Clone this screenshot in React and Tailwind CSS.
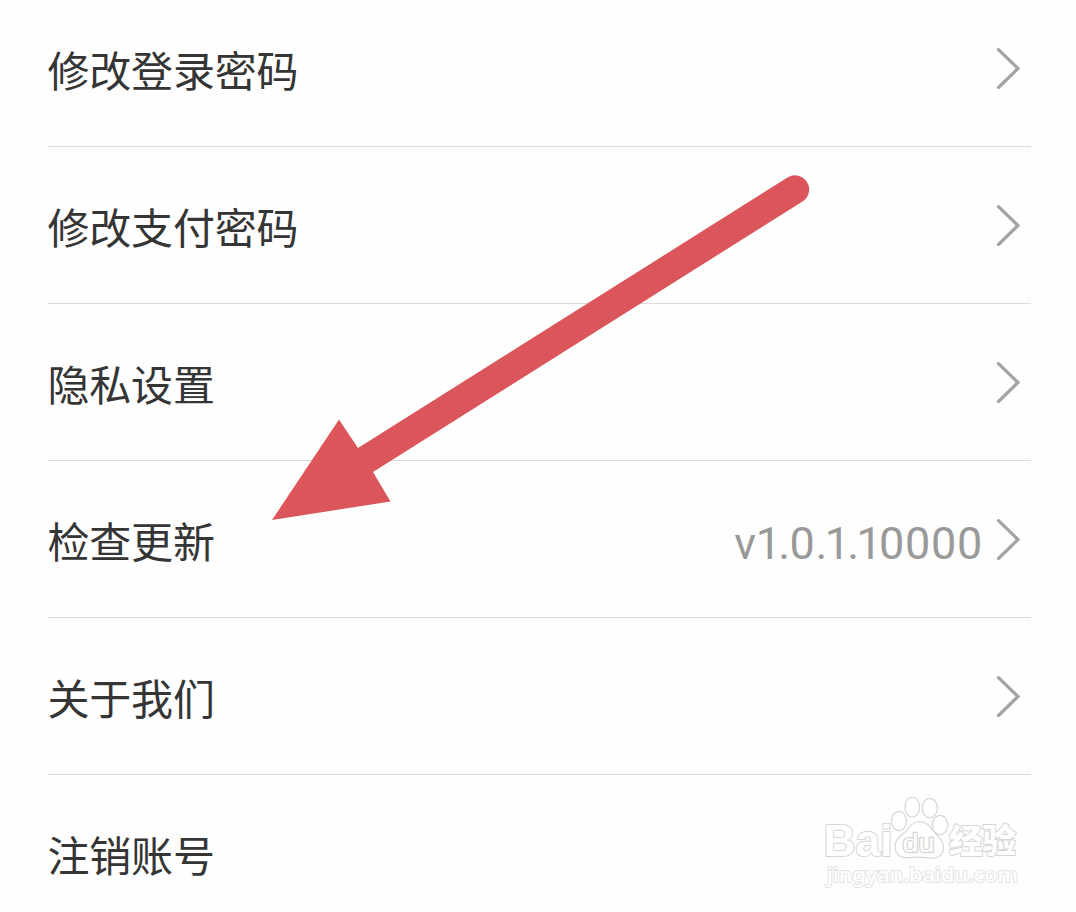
const items = [
  { label: '修改登录密码', arrow: true },
  { label: '修改支付密码', arrow: true },
  { label: '隐私设置', arrow: true },
  { label: '检查更新', arrow: true, version: true },
  { label: '关于我们', arrow: true },
  { label: '注销账号', arrow: false },
];

function Chevron() {
  return (
    <svg className="h-[42px] w-[24px] shrink-0" viewBox="0 0 24 42" fill="none">
      <path d="M2.500 2.700L22 21.500L2.500 40.500" stroke="#a3a3a3" strokeWidth="3.200" strokeLinecap="round" />
    </svg>
  );
}

function Version() {
  return (
    <span className="mr-[13px] translate-y-[5px] font-['Roboto',sans-serif] text-[45px] leading-[52px] whitespace-nowrap text-[#999999] [font-kerning:none]">
      <span className="tracking-[-0.5px]">v</span>
      <span className="tracking-[-2.7px]">1</span>
      <span className="tracking-[-0.6px]">.</span>
      <span className="tracking-[0.7px]">0</span>
      <span className="tracking-[-2.7px]">.1.1</span>
      <span className="tracking-[0.7px]">0000</span>
    </span>
  );
}

function Row({ item }) {
  return (
    <li className="flex h-[157px] shrink-0 items-center border-b border-[#dcdcdc] pr-[11px]">
      <span className="-ml-[0.5px] flex-1 translate-y-[1px] font-['Noto_Sans_CJK_SC',sans-serif] text-[42px] leading-[60px] tracking-[-0.2px] text-[#353535]">
        {item.label}
      </span>
      {item.version && <Version />}
      {item.arrow && <Chevron />}
    </li>
  );
}

function Pointer() {
  return (
    <svg className="pointer-events-none absolute top-0 left-0 h-[912px] w-[1076px]" viewBox="0 0 1076 912">
      <path
        d="M272 520L339 419.500L358 448L787.500 177.500A14 14 0 0 1 802.500 201.500L373 472L390.500 501.500Z"
        fill="#db565b"
      />
    </svg>
  );
}

function Watermark() {
  return (
    <svg
      className="pointer-events-none absolute top-[780px] left-[810px] h-[120px] w-[230px]"
      viewBox="0 0 230 120"
      fill="#ffffff"
      stroke="#d6d6d6"
      strokeWidth="1.200"
    >
      <g strokeWidth="2" style={{ paintOrder: 'stroke' }}>
        <text x="13.500" y="76" fontFamily="'Liberation Sans', sans-serif" fontWeight="700" fontSize="43.500" textLength="69" lengthAdjust="spacingAndGlyphs">Bai</text>
        <text x="139" y="73" fontFamily="'Noto Sans CJK SC', sans-serif" fontWeight="900" fontSize="33" textLength="67" lengthAdjust="spacingAndGlyphs">经验</text>
        <text x="17" y="102" fontFamily="'Noto Sans', sans-serif" fontWeight="500" fontSize="20.500" stroke="#e4e4e4" textLength="191" lengthAdjust="spacingAndGlyphs">jingyan.baidu.com</text>
      </g>
      <ellipse cx="89" cy="41" rx="7.500" ry="9.700" />
      <ellipse cx="102.300" cy="27" rx="7.300" ry="10" />
      <ellipse cx="119.700" cy="28" rx="7.500" ry="9.700" />
      <ellipse cx="130" cy="45" rx="7.700" ry="9.700" />
      <path d="M109 41.500C102 41.500 99.500 48 95 52C88.500 57.500 84.500 61 85 67.500C85.500 75 92 78.700 99 77.700C106 76.700 112 76.700 119 78C127.500 79.500 133 75 133.500 68C133.800 61 129 57.500 124 51.500C119.500 46 116 41.500 109 41.500Z" />
      <text x="92.500" y="71.500" fontFamily="'Liberation Sans', sans-serif" fontSize="25" strokeWidth="2.400" style={{ paintOrder: 'stroke' }} textLength="32" lengthAdjust="spacingAndGlyphs">du</text>
    </svg>
  );
}

export default function App() {
  return (
    <main className="relative h-[912px] w-[1076px] overflow-hidden bg-[#fefefe]">
      <ul className="-mt-[10px] mr-[45px] ml-[48px] flex flex-col">
        {items.map((item) => (
          <Row key={item.label} item={item} />
        ))}
      </ul>
      <Pointer />
      <Watermark />
    </main>
  );
}
